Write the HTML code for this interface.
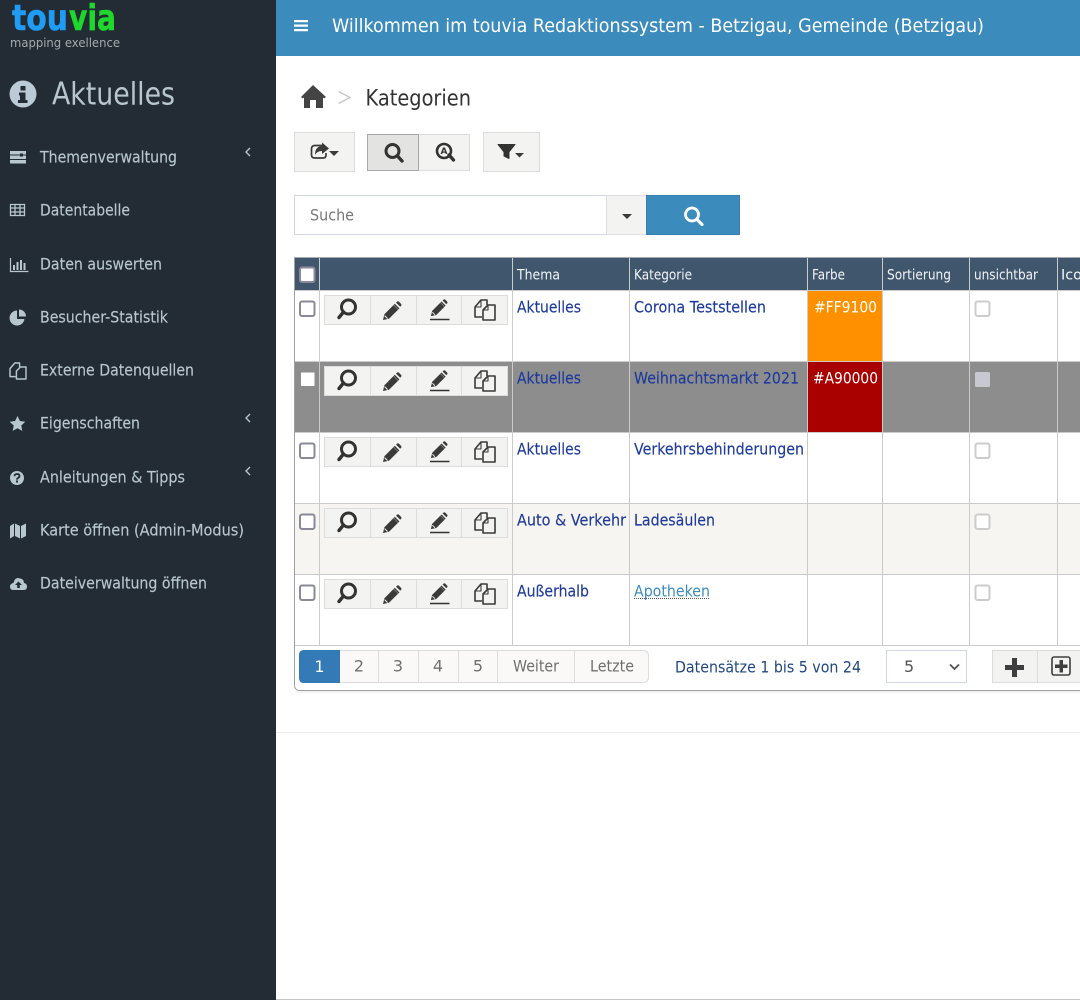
<!DOCTYPE html>
<html lang="de"><head><meta charset="utf-8"><title>Kategorien</title>
<style>
html,body{margin:0;padding:0;background:#fff;width:1080px;height:1000px;overflow:hidden}
svg{display:block;font-family:"DejaVu Sans","Liberation Sans",sans-serif}
.m{fill:#b8c7ce;stroke:#b8c7ce;stroke-width:.15px;font-size:16px;transform:translateY(-.7px)}
.th{fill:#f2f4f6;font-size:14px;transform:translateY(-.5px)}
.l{fill:#1e3a9c;stroke:#1e3a9c;stroke-width:.15px;font-size:16px;transform:translateY(-.7px)}
.p{fill:#6f6f6f;font-size:16px;transform:translateY(-.3px)}
</style></head><body>
<svg width="1080" height="1000" viewBox="0 0 1080 1000" xmlns="http://www.w3.org/2000/svg">
<defs>
<g id="ms"><circle cx="1.500" cy="-3" r="7" fill="none" stroke="#333" stroke-width="3"/><path d="M-3.500 2L-8 7.500" stroke="#333" stroke-width="3.400" stroke-linecap="round"/></g>
<g id="pen"><path d="M-9 9L-7.600 3.200L2.800-7.200L7.400-2.600L-3 7.800Z" fill="#3a3a3a"/><path d="M4-8.400L5.200-9.400Q6-10 6.800-9.400L9.200-7Q9.800-6.200 9.200-5.400L8.200-4.200Z" fill="#3a3a3a"/><path d="M-7.400 4.600L-4.400 7.600" stroke="#f3f3f1" stroke-width="1"/><path d="M1.600-6L6.200-1.400" stroke="#8a8a8a" stroke-width=".8"/></g>
<g id="cp" fill="none" stroke="#3a3a3a" stroke-width="1.600" stroke-linejoin="round"><path d="M-3 7H-10V-3L-4-10H2V-5"/><path d="M-4-10V-3H-10" stroke-width="1.100"/><path d="M-2 0L3-5H10V10H-2Z"/><path d="M3-5V0H-2" stroke-width="1.100"/></g>
<g id="act">
<rect x=".5" y=".5" width="183" height="29" fill="#f3f3f1" stroke="#dcdcdc"/>
<path d="M46.500 0V30M92.500 0V30M137.500 0V30" stroke="#dcdcdc"/>
<use href="#ms" x="23" y="15"/>
<use href="#pen" transform="translate(68 16)"/>
<g transform="translate(115 13) scale(.9)"><use href="#pen"/></g><path d="M106 24.500H125.500" stroke="#333" stroke-width="1.500"/>
<use href="#cp" x="161" y="15"/>
</g>
<rect id="cb" x="1" y="1" width="14.500" height="14.500" rx="2" fill="#fff" stroke="#8a8a98" stroke-width="2"/>
<rect id="cu" x="1" y="1" width="14" height="14.500" rx="2" fill="#fff" stroke="#ccc" stroke-width="2"/>
</defs>

<rect width="1080" height="1000" fill="#fff"/>
<rect x="276" y="999" width="804" height="1" fill="#c4c4c4"/>
<!-- sidebar -->
<rect width="276" height="1000" fill="#232c34"/>
<text x="12" y="30" font-weight="700" font-size="36" fill="#1f9cf5" stroke="#1f9cf5" stroke-width=".6" textLength="56" lengthAdjust="spacingAndGlyphs">tou</text>
<text x="69" y="30" font-weight="700" font-size="36" fill="#1ed92c" stroke="#1ed92c" stroke-width=".6" textLength="47" lengthAdjust="spacingAndGlyphs">via</text>
<text x="10" y="47" font-size="12.500" fill="#a6abad" textLength="110" lengthAdjust="spacingAndGlyphs">mapping exellence</text>

<circle cx="23" cy="94" r="13.500" fill="#bccad6"/>
<path d="M20.500 86h5v4.500h-5zM19 92.500h6.500v7.500h2v3h-9.500v-3h2v-4.500h-1z" fill="#232c34"/>
<text x="52" y="104.500" font-size="31" fill="#b8c7ce" textLength="123" lengthAdjust="spacingAndGlyphs">Aktuelles</text>

<text class="m" x="40" y="163" textLength="137" lengthAdjust="spacingAndGlyphs">Themenverwaltung</text>
<text class="m" x="40" y="216" textLength="90" lengthAdjust="spacingAndGlyphs">Datentabelle</text>
<text class="m" x="40" y="270" textLength="122" lengthAdjust="spacingAndGlyphs">Daten auswerten</text>
<text class="m" x="40" y="323" textLength="128" lengthAdjust="spacingAndGlyphs">Besucher-Statistik</text>
<text class="m" x="40" y="376" textLength="154" lengthAdjust="spacingAndGlyphs">Externe Datenquellen</text>
<text class="m" x="40" y="429" textLength="100" lengthAdjust="spacingAndGlyphs">Eigenschaften</text>
<text class="m" x="40" y="483" textLength="145" lengthAdjust="spacingAndGlyphs">Anleitungen &amp; Tipps</text>
<text class="m" x="40" y="536" textLength="204" lengthAdjust="spacingAndGlyphs">Karte öffnen (Admin-Modus)</text>
<text class="m" x="40" y="589" textLength="167" lengthAdjust="spacingAndGlyphs">Dateiverwaltung öffnen</text>

<path d="M250 148L246 152L250 156M250 414L246 418L250 422M250 467L246 471L250 475" fill="none" stroke="#b8c7ce" stroke-width="1.400"/>
<!-- sidebar icons -->
<path d="M10 151h16v3.500h-3v-1h-3v1h-10zM10 155.500h10v1h3v-1h3v3.500h-16zM10 160h16v3.500h-16z" fill="#b8c7ce"/>
<path d="M10.500 204.500h14v11h-14zM10.500 208h14M10.500 212h14M15 204.500v11M20 204.500v11" fill="none" stroke="#b8c7ce" stroke-width="1.300"/>
<path d="M10.500 258v13.500h18" fill="none" stroke="#b8c7ce" stroke-width="1.200"/><path d="M13 265h2v5h-2zM16.500 262h2v8h-2zM20 260h2v10h-2zM23.500 263h2v7h-2z" fill="#b8c7ce"/>
<path d="M17 310.500A7.500 7.500 0 1 0 24.500 319H17ZM19 309.500A7 7 0 0 1 26 316.500H19Z" fill="#b8c7ce"/>
<g transform="translate(18 371) scale(.8)" fill="none" stroke="#b8c7ce" stroke-width="1.800" stroke-linejoin="round"><path d="M-3 7H-10V-3L-4-10H2V-5"/><path d="M-2 0L3-5H10V10H-2Z"/></g>
<path d="M17.500 416l2.400 5 5.400.7-4 3.800 1 5.400-4.800-2.600-4.800 2.600 1-5.400-4-3.800 5.400-.7z" fill="#b8c7ce"/>
<circle cx="17" cy="478" r="7" fill="#b8c7ce"/><path d="M14.500 476.200Q14.700 474 17 474Q19.500 474 19.500 476Q19.500 477.300 18 478Q17 478.600 17 479.600" fill="none" stroke="#232c34" stroke-width="1.800"/><rect x="16" y="480.500" width="2" height="2" fill="#232c34"/>
<path d="M10 526l4-2.500v12.500l-4 2.500zM15 523.500l5 2.500v12.500l-5-2.500zM21 526l5-2.500v12.500l-5 2.500z" fill="#b8c7ce"/>
<path d="M13 590H24Q27 590 27 586.500Q27 583.500 24 583Q24 579 20 578.500Q17 577 14.500 580Q14 582.500 13 583Q10 584 10 586.500Q10 590 13 590Z" fill="#b8c7ce"/><path d="M18.500 581.500l3.500 3.500h-2.200v3h-2.600v-3h-2.200z" fill="#232c34"/>

<!-- top bar -->
<rect x="276" width="804" height="56" fill="#3b8bbc"/>
<path d="M294 20h14v2.200h-14zM294 24.500h14v2.200h-14zM294 29h14v2.200h-14z" fill="#fff"/>
<text x="332" y="32" font-size="19" fill="#fff" textLength="652" lengthAdjust="spacingAndGlyphs">Willkommen im touvia Redaktionssystem - Betzigau, Gemeinde (Betzigau)</text>

<!-- breadcrumb -->
<path d="M313 85L326 97L324 98.500L323 97.500V108H316V100H310V108H304V97.500L302.500 98.500L301 97Z" fill="#444"/>
<path d="M338.500 91.500L350 97.500L338.500 103.500" fill="none" stroke="#c8c8c8" stroke-width="1.400"/>
<text x="365.500" y="105.500" font-size="22" fill="#333" textLength="105.500" lengthAdjust="spacingAndGlyphs">Kategorien</text>

<!-- toolbar -->
<rect x="294.500" y="132.500" width="60" height="39" fill="#f3f3f1" stroke="#dcdcdc"/>
<path d="M322 145.500H315Q311.500 145.500 311.500 149V155Q311.500 158 315 158H323Q326 158 326 155V153" fill="none" stroke="#3a3a3a" stroke-width="1.700"/>
<path d="M322 142.500L329 148.500L322 154V151Q317 151 315 155Q315 146.500 322 146Z" fill="#3a3a3a"/>
<path d="M329 151h10l-5 5z" fill="#3a3a3a"/>
<rect x="367.500" y="134.500" width="102" height="36" fill="#f3f3f1" stroke="#dcdcdc"/>
<rect x="367.500" y="134.500" width="51" height="36" fill="#e3e3e2" stroke="#a8a8a8"/>
<circle cx="392.500" cy="151" r="6.500" fill="none" stroke="#333" stroke-width="3"/><path d="M397.500 156L402 161" stroke="#333" stroke-width="3.400" stroke-linecap="round"/>
<g transform="translate(445 153)"><circle cx="-1" cy="-2" r="7" fill="none" stroke="#333" stroke-width="2.600"/><path d="M4 2L8.500 7" stroke="#333" stroke-width="3.300" stroke-linecap="round"/><text x="-1" y="1" font-size="9" font-weight="700" text-anchor="middle" fill="#333">A</text></g>
<rect x="483.500" y="132.500" width="56" height="39" fill="#f3f3f1" stroke="#dcdcdc"/>
<path d="M498 144.500H515L509 152V158.500L504 156V152Z" fill="#333" stroke="#333" stroke-linejoin="round"/>
<path d="M515 153h9l-4.500 4.500z" fill="#3a3a3a"/>

<!-- search -->
<rect x="294.500" y="195.500" width="312" height="39" fill="#fff" stroke="#d2d6e0"/>
<text x="310" y="220.500" font-size="16" fill="#777" textLength="44" lengthAdjust="spacingAndGlyphs">Suche</text>
<rect x="606.500" y="195.500" width="40" height="39" fill="#f3f3f1" stroke="#dedee2"/>
<path d="M622 214h10l-5 5z" fill="#3a3a3a"/>
<rect x="646.500" y="195.500" width="93" height="39" fill="#3b8bbc" stroke="#3a7fb0"/>
<circle cx="692" cy="214.500" r="6.500" fill="none" stroke="#fff" stroke-width="2.800"/><path d="M697 219.500L702 224.500" stroke="#fff" stroke-width="3.200" stroke-linecap="round"/>

<!-- table -->
<rect x="294" y="257" width="786" height="1" fill="#aaa"/>
<rect x="294" y="258" width="786" height="32.500" fill="#40566c"/>
<rect x="295" y="504" width="785" height="70" fill="#f6f5f1"/>
<rect x="295" y="362" width="785" height="70" fill="#8c8d8c"/>
<rect x="808" y="291" width="74" height="70" fill="#ff9100"/>
<rect x="808" y="362" width="74" height="70" fill="#a90000"/>

<g stroke="#cbcbcb" fill="none">
<path d="M294.500 290.500H1080M294.500 361.500H1080M294.500 432.500H1080M294.500 503.500H1080M294.500 574.500H1080M294.500 645.500H1080"/>
<path d="M319.500 258V645M512.500 258V645M629.500 258V645M807.500 258V645M882.500 258V645M969.500 258V645M1057.500 258V645"/>
</g>
<path d="M294.500 257.500V685Q294.500 690 299 690.500H1080" fill="none" stroke="#a0a0a0"/>
<rect x="295" y="691" width="785" height="2" fill="#f2f2f2"/>
<rect x="276" y="732" width="804" height="1" fill="#eee"/>

<use href="#cb" transform="translate(299 266.500)"/>
<text class="th" x="517" y="280" textLength="43" lengthAdjust="spacingAndGlyphs">Thema</text>
<text class="th" x="634" y="280" textLength="58" lengthAdjust="spacingAndGlyphs">Kategorie</text>
<text class="th" x="812" y="280" textLength="33" lengthAdjust="spacingAndGlyphs">Farbe</text>
<text class="th" x="887" y="280" textLength="64" lengthAdjust="spacingAndGlyphs">Sortierung</text>
<text class="th" x="974" y="280" textLength="64" lengthAdjust="spacingAndGlyphs">unsichtbar</text>
<text class="th" x="1061" y="280" textLength="30" lengthAdjust="spacingAndGlyphs">Icon</text>

<!-- rows -->
<use href="#cb" transform="translate(299 300.500)"/>
<rect x="301" y="372.500" width="13.500" height="13.500" fill="#fff"/>
<use href="#cb" transform="translate(299 442.500)"/>
<use href="#cb" transform="translate(299 513.500)"/>
<use href="#cb" transform="translate(299 584.500)"/>

<use href="#act" x="324" y="295"/>
<use href="#act" x="324" y="366"/>
<use href="#act" x="324" y="437"/>
<use href="#act" x="324" y="508"/>
<use href="#act" x="324" y="579"/>

<text class="l" x="517" y="313" textLength="64" lengthAdjust="spacingAndGlyphs">Aktuelles</text>
<text class="l" x="634" y="313" textLength="132" lengthAdjust="spacingAndGlyphs">Corona Teststellen</text>
<text x="814" y="312.500" font-size="16" fill="#fff" textLength="63" lengthAdjust="spacingAndGlyphs">#FF9100</text>
<text class="l" x="517" y="384" textLength="64" lengthAdjust="spacingAndGlyphs">Aktuelles</text>
<text class="l" x="634" y="384" textLength="165" lengthAdjust="spacingAndGlyphs">Weihnachtsmarkt 2021</text>
<text x="813" y="383.500" font-size="16" fill="#fff" textLength="65" lengthAdjust="spacingAndGlyphs">#A90000</text>
<text class="l" x="517" y="455" textLength="64" lengthAdjust="spacingAndGlyphs">Aktuelles</text>
<text class="l" x="634" y="455" textLength="170" lengthAdjust="spacingAndGlyphs">Verkehrsbehinderungen</text>
<text class="l" x="517" y="526" textLength="109" lengthAdjust="spacingAndGlyphs">Auto &amp; Verkehr</text>
<text class="l" x="634" y="526" textLength="81" lengthAdjust="spacingAndGlyphs">Ladesäulen</text>
<text class="l" x="517" y="597" textLength="72" lengthAdjust="spacingAndGlyphs">Außerhalb</text>
<text x="634" y="596.500" font-size="16" fill="#3c8dbc" textLength="76" lengthAdjust="spacingAndGlyphs">Apotheken</text>
<path d="M634 598.500H710" stroke="#555" stroke-dasharray="1 1"/>

<use href="#cu" transform="translate(974.500 300.500)"/>
<rect x="975" y="372" width="15" height="15" rx="1.500" fill="#c8c8d0"/>
<use href="#cu" transform="translate(974.500 442.500)"/>
<use href="#cu" transform="translate(974.500 513.500)"/>
<use href="#cu" transform="translate(974.500 584.500)"/>

<!-- pagination -->
<rect x="299.500" y="650.500" width="349" height="32" rx="5" fill="#faf9f7" stroke="#dcdcdc"/>
<path d="M304 650H340V683H304Q299 683 299 678V655Q299 650 304 650Z" fill="#337ab7"/>
<path d="M378.500 651V683M418.500 651V683M458.500 651V683M497.500 651V683M574.500 651V683" stroke="#dcdcdc"/>
<text x="319.500" y="672" font-size="16" fill="#fff" text-anchor="middle">1</text>
<text class="p" x="359" y="672" text-anchor="middle">2</text>
<text class="p" x="398" y="672" text-anchor="middle">3</text>
<text class="p" x="438" y="672" text-anchor="middle">4</text>
<text class="p" x="478" y="672" text-anchor="middle">5</text>
<text class="p" x="513" y="672" textLength="46" lengthAdjust="spacingAndGlyphs">Weiter</text>
<text class="p" x="590" y="672" textLength="44" lengthAdjust="spacingAndGlyphs">Letzte</text>
<text x="675" y="672.500" font-size="16" fill="#20487e" textLength="186" lengthAdjust="spacingAndGlyphs">Datensätze 1 bis 5 von 24</text>
<rect x="886.500" y="650.500" width="80" height="32" fill="#fff" stroke="#d0d8e2"/>
<text x="904" y="672" font-size="16" fill="#555">5</text>
<path d="M950 664.500L954.500 669L959 664.500" fill="none" stroke="#555" stroke-width="1.800"/>
<rect x="992.500" y="650.500" width="90" height="32" fill="#f3f3f1" stroke="#dcdcdc"/>
<path d="M1037.500 651V683" stroke="#dcdcdc"/>
<path d="M1012 658h5v7h7v5h-7v7h-5v-7h-7v-5h7z" fill="#3f3f3f"/>
<rect x="1052" y="657" width="18" height="18" rx="2" fill="none" stroke="#3f3f3f" stroke-width="1.600"/>
<path d="M1059.500 660h3.500v4.500h4.500v3.500h-4.500v4.500h-3.500v-4.500h-4.500v-3.500h4.500z" fill="#3f3f3f"/>
</svg>
</body></html>
